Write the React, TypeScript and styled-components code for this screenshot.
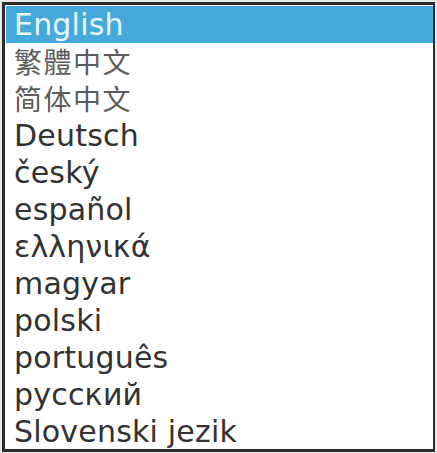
import React, { useState } from 'react'
import styled, { createGlobalStyle } from 'styled-components'

const GlobalStyle = createGlobalStyle`
    html, body {
        margin: 0;
        padding: 0;
        background: #ffffff;
    }
`

const languages = [
    'English',
    '繁體中文',
    '简体中文',
    'Deutsch',
    'český',
    'español',
    'ελληνικά',
    'magyar',
    'polski',
    'português',
    'русский',
    'Slovenski jezik',
]

const Frame = styled.div`
    width: 437px;
    height: 453px;
    box-sizing: border-box;
    padding: 2px 2px 1px 2px;
    background: #e9e9e9;
`

const ListBox = styled.ul`
    margin: 0;
    height: 100%;
    box-sizing: border-box;
    list-style: none;
    padding: 1px 0 0 1px;
    background: #ffffff;
    border: 3px solid #2b2b2b;
    border-right-width: 2px;
    overflow: hidden;
    font-family: 'DejaVu Sans', Verdana, 'Noto Sans CJK SC', sans-serif;
    font-size: 30px;
`

const Option = styled.li<{ selected: boolean }>`
    height: 37px;
    line-height: 37px;
    padding-left: 8px;
    white-space: nowrap;
    cursor: default;
    letter-spacing: 0.2px;
    background: ${(props) => (props.selected ? '#45a9dc' : 'transparent')};
    color: ${(props) => (props.selected ? '#eaf6fc' : '#323232')};
`

const CjkText = styled.span`
    font-size: 28px;
    letter-spacing: 1.5px;
    font-family: 'Noto Sans CJK TC', 'Noto Sans CJK SC', sans-serif;
    color: #5c5c5c;
`

const isCjk = (label: string) => /[\u4e00-\u9fff]/.test(label)

function App() {
    const [selected, setSelected] = useState(0)

    return (
        <>
            <GlobalStyle />
            <Frame>
                <ListBox role="listbox">
                    {languages.map((label, i) => (
                        <Option
                            key={label}
                            role="option"
                            selected={i === selected}
                            aria-selected={i === selected}
                            onClick={() => setSelected(i)}
                        >
                            {isCjk(label) ? <CjkText>{label}</CjkText> : label}
                        </Option>
                    ))}
                </ListBox>
            </Frame>
        </>
    )
}

export default App
